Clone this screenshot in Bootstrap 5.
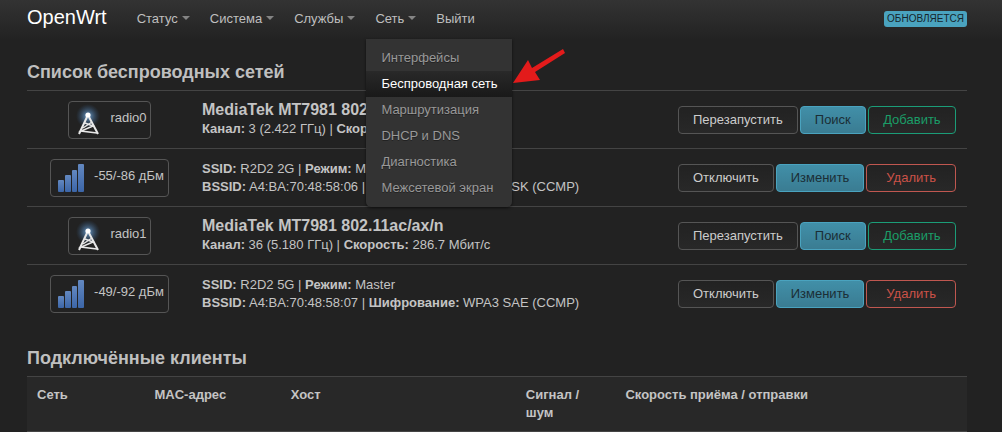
<!DOCTYPE html>
<html lang="ru" data-bs-theme="dark">
<head>
<meta charset="utf-8">
<meta name="viewport" content="width=device-width, initial-scale=1">
<title>OpenWrt – Беспроводная сеть</title>
<link href="https://cdn.jsdelivr.net/npm/bootstrap@5.3.0/dist/css/bootstrap.min.css" rel="stylesheet">
<style>
  body { background: #222; color: #c4c4c4; font: 13px/18px "Liberation Sans", Arial, sans-serif; }
  .page-pad { padding-left: 27px; padding-right: 35px; }
  .top-bar { height: 40px; padding-top: 0; padding-bottom: 0; background: linear-gradient(#333, #222); }
  .top-bar .navbar-brand { font-size: 20px; line-height: 20px; color: #fff; padding: 0; margin: 0 20px 6px 0; }
  .top-bar .navbar-nav .nav-link { color: #bfbfbf; padding: 8px 10px 11px; line-height: 20px; }
  .top-bar .dropdown-toggle::after { border-width: 4px 4px 0; margin-left: 4px; vertical-align: 3px; opacity: .6; }
  .top-bar .dropdown-menu { top: 38px; left: 1px; width: 146px; min-width: 0; margin: 0; padding: 6px 0; font-size: 13px;
    background: #333; border: 0; border-radius: 0 0 5px 5px; box-shadow: 0 1px 3px rgba(0, 0, 0, .6); }
  .top-bar .dropdown-item { color: #999; padding: 4px 15px; line-height: 18px; text-shadow: 0 1px 0 #222; }
  .top-bar .dropdown-item.active { color: #fff; background: linear-gradient(#292929, #191919); }
  .pointer-arrow { left: 100%; top: -22px; }
  .status-tag { font-size: 10px; line-height: 16px; padding: 0 3px; border-radius: 3px; background: #4aa3bf; color: #16252b; text-transform: uppercase; margin-bottom: 2px; }
  .networks { padding: 14px 0 17px; }
  .section-title { font-size: 18px; line-height: 36px; font-weight: 700; color: #bfbfbf; margin: 0; }
  .wifi-list { --bs-table-bg: transparent; --bs-table-color: #c4c4c4; border-color: #444; }
  .wifi-list > tbody > tr > td { height: 58px; padding: 0 10px; border-width: 1px 0 0; }
  .wifi-list .state-col { width: 165px; }
  .wifi-list .action-col { width: 299px; }
  .wifi-list > tbody > tr > td:last-child { padding-right: 11px; }
  .iface-box { width: fit-content; height: 38px; padding: 0 3px 0 5px; border: 1px solid #555; border-radius: 4px; }
  .signal-box { padding: 0 4px 0 7px; gap: 9px; }
  .device-name { font-size: 16px; }
  .row-actions { gap: 2px; }
  .row-actions .btn { font-size: 13px; line-height: 18px; padding: 4px 14px; border-radius: 4px; white-space: nowrap; }
  .row-actions .btn:last-child { flex-grow: 1; padding-left: 8px; padding-right: 8px; }
  .btn-plain { color: #ccc; border-color: #555; background: linear-gradient(#222, #282828); }
  .btn-blue { color: #1b2e35; border-color: #4aa3bf; background: linear-gradient(#418fa8, #3a7c92); }
  .btn-green { color: #1b9d68; border-color: #1b9d78; background: linear-gradient(#222, #282828); }
  .btn-red { color: #cb5248; border-color: #c05750; background: linear-gradient(#222, #282828); }
  .client-list { --bs-table-bg: #282828; --bs-table-color: #c4c4c4; border-color: #444; table-layout: fixed; }
  .client-list th { padding: 9px 10px; vertical-align: top; border-width: 1px 0; }
  .net-col { width: 12.5%; } .mac-col { width: 14.5%; } .host-col { width: 25%; } .signal-col { width: 10.6%; }
</style>
</head>
<body>
<svg class="position-absolute" width="0" height="0" aria-hidden="true">
  <defs>
    <radialGradient id="glow"><stop offset="0" stop-color="#79aee0" stop-opacity=".9"/><stop offset="1" stop-color="#335d8c" stop-opacity="0"/></radialGradient>
    <linearGradient id="bar" x1="0" y1="0" x2="0" y2="1"><stop offset="0" stop-color="#6388c0"/><stop offset="1" stop-color="#3c66a8"/></linearGradient>
  </defs>
  <symbol id="antenna" viewBox="0 0 36 36"><circle cx="14" cy="14" r="12" fill="url(#glow)"/><g fill="none" stroke="#e8e8e8"><path stroke-width="2" d="M13 15 5 32M15 15 24 32"/><path stroke-width="1.5" d="M11 21 19 24 7 29 23 31M9 26 18 20"/></g><circle cx="14" cy="13" r="2.6" fill="#fff"/></symbol>
  <symbol id="signal" viewBox="0 0 27 28"><g fill="url(#bar)"><rect y="16" width="6" height="12" rx="1"/><rect x="7" y="11" width="6" height="17" rx="1"/><rect x="14" y="6" width="5" height="22" rx="1"/><rect x="20" width="6" height="28" rx="1"/></g></symbol>
</svg>
<header class="navbar navbar-expand top-bar page-pad">
  <a class="navbar-brand" href="#">OpenWrt</a>
  <ul class="navbar-nav me-auto">
    <li class="nav-item dropdown"><a class="nav-link dropdown-toggle" href="#">Статус</a></li>
    <li class="nav-item dropdown"><a class="nav-link dropdown-toggle" href="#">Система</a></li>
    <li class="nav-item dropdown"><a class="nav-link dropdown-toggle" href="#">Службы</a></li>
    <li class="nav-item dropdown">
      <a class="nav-link dropdown-toggle" href="#" aria-expanded="true">Сеть</a>
      <ul class="dropdown-menu show">
        <li><a class="dropdown-item" href="#">Интерфейсы</a></li>
        <li class="position-relative">
          <a class="dropdown-item active" href="#">Беспроводная сеть</a>
          <svg class="pointer-arrow position-absolute" width="54" height="36" viewBox="0 0 54 36" aria-hidden="true"><path d="M1 34 16 11 20 19 51 0 53 4 23 23 28 31Z" fill="#e31b1b"/></svg>
        </li>
        <li><a class="dropdown-item" href="#">Маршрутизация</a></li>
        <li><a class="dropdown-item" href="#">DHCP и DNS</a></li>
        <li><a class="dropdown-item" href="#">Диагностика</a></li>
        <li><a class="dropdown-item" href="#">Межсетевой экран</a></li>
      </ul>
    </li>
    <li class="nav-item"><a class="nav-link" href="#">Выйти</a></li>
  </ul>
  <span class="status-tag">Обновляется</span>
</header>

<main class="page-pad">
  <section class="networks">
    <h3 class="section-title">Список беспроводных сетей</h3>
    <table class="table wifi-list align-middle mb-0">
      <tbody>
        <tr>
          <td class="state-col">
            <div class="iface-box d-flex align-items-center mx-auto">
              <svg width="36" height="36" aria-hidden="true"><use href="#antenna"/></svg>
              <span class="pb-1">radio0</span>
            </div>
          </td>
          <td><strong class="device-name">MediaTek MT7981 802.11ax/b/g/n</strong><br><strong>Канал:</strong> 3 (2.422 ГГц) | <strong>Скорость:</strong> 286.7 Мбит/с</td>
          <td class="action-col"><div class="row-actions d-flex"><button type="button" class="btn btn-plain">Перезапустить</button><button type="button" class="btn btn-blue">Поиск</button><button type="button" class="btn btn-green">Добавить</button></div></td>
        </tr>
        <tr>
          <td>
            <div class="iface-box signal-box d-flex align-items-center mx-auto">
              <svg width="27" height="28" aria-hidden="true"><use href="#signal"/></svg>
              <span class="pb-1">-55/-86 дБм</span>
            </div>
          </td>
          <td><strong>SSID:</strong> R2D2 2G | <strong>Режим:</strong> Master<br><strong>BSSID:</strong> A4:BA:70:48:58:06 | <strong>Шифрование:</strong> WPA2 PSK (CCMP)</td>
          <td><div class="row-actions d-flex"><button type="button" class="btn btn-plain">Отключить</button><button type="button" class="btn btn-blue">Изменить</button><button type="button" class="btn btn-red">Удалить</button></div></td>
        </tr>
        <tr>
          <td>
            <div class="iface-box d-flex align-items-center mx-auto">
              <svg width="36" height="36" aria-hidden="true"><use href="#antenna"/></svg>
              <span class="pb-1">radio1</span>
            </div>
          </td>
          <td><strong class="device-name">MediaTek MT7981 802.11ac/ax/n</strong><br><strong>Канал:</strong> 36 (5.180 ГГц) | <strong>Скорость:</strong> 286.7 Мбит/с</td>
          <td><div class="row-actions d-flex"><button type="button" class="btn btn-plain">Перезапустить</button><button type="button" class="btn btn-blue">Поиск</button><button type="button" class="btn btn-green">Добавить</button></div></td>
        </tr>
        <tr>
          <td>
            <div class="iface-box signal-box d-flex align-items-center mx-auto">
              <svg width="27" height="28" aria-hidden="true"><use href="#signal"/></svg>
              <span class="pb-1">-49/-92 дБм</span>
            </div>
          </td>
          <td><strong>SSID:</strong> R2D2 5G | <strong>Режим:</strong> Master<br><strong>BSSID:</strong> A4:BA:70:48:58:07 | <strong>Шифрование:</strong> WPA3 SAE (CCMP)</td>
          <td><div class="row-actions d-flex"><button type="button" class="btn btn-plain">Отключить</button><button type="button" class="btn btn-blue">Изменить</button><button type="button" class="btn btn-red">Удалить</button></div></td>
        </tr>
      </tbody>
    </table>
  </section>
  <section>
    <h3 class="section-title">Подключённые клиенты</h3>
    <table class="table client-list mb-0">
      <thead>
        <tr><th class="net-col">Сеть</th><th class="mac-col">MAC-адрес</th><th class="host-col">Хост</th><th class="signal-col">Сигнал / шум</th><th>Скорость приёма / отправки</th></tr>
      </thead>
    </table>
  </section>
</main>
<script src="https://cdn.jsdelivr.net/npm/bootstrap@5.3.0/dist/js/bootstrap.bundle.min.js"></script>
</body>
</html>
